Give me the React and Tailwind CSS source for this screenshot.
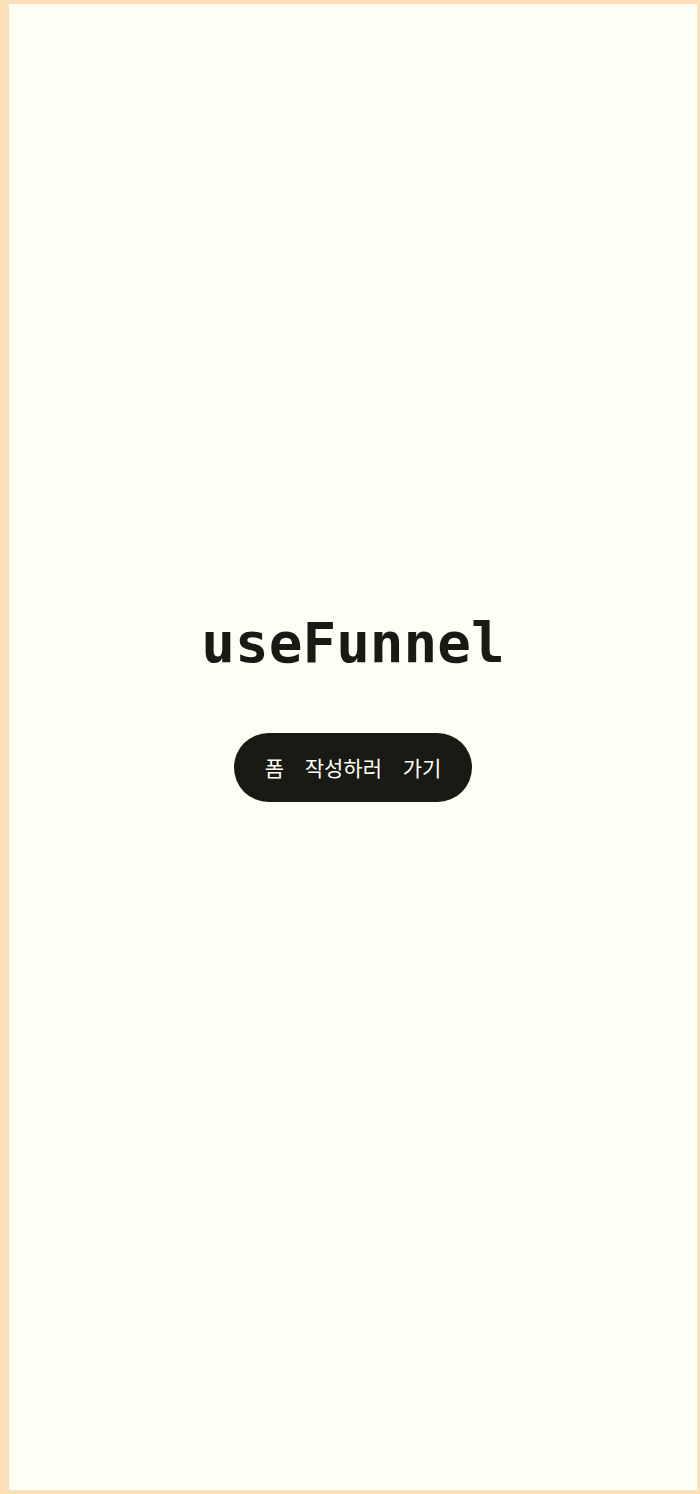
export default function App() {
  return (
    <div className="min-h-screen bg-[#fbe0b9] pl-[9px] pr-[3px] pt-[4px] pb-[4px]">
      <div className="h-[1486px] bg-[#fffef4] flex flex-col items-center pt-[597px]">
        <h1 className="font-['DejaVu_Sans_Mono',monospace] font-bold text-[56px] leading-[84px] text-[#1a1a14]">
          useFunnel
        </h1>
        <button className="mt-[48px] h-[69px] w-[238px] rounded-full bg-[#1a1a14] text-[#fffef4] text-[21px] font-['Noto_Sans_CJK_KR','Noto_Sans',sans-serif] [word-spacing:16px]">
          폼 작성하러 가기
        </button>
      </div>
    </div>
  );
}
